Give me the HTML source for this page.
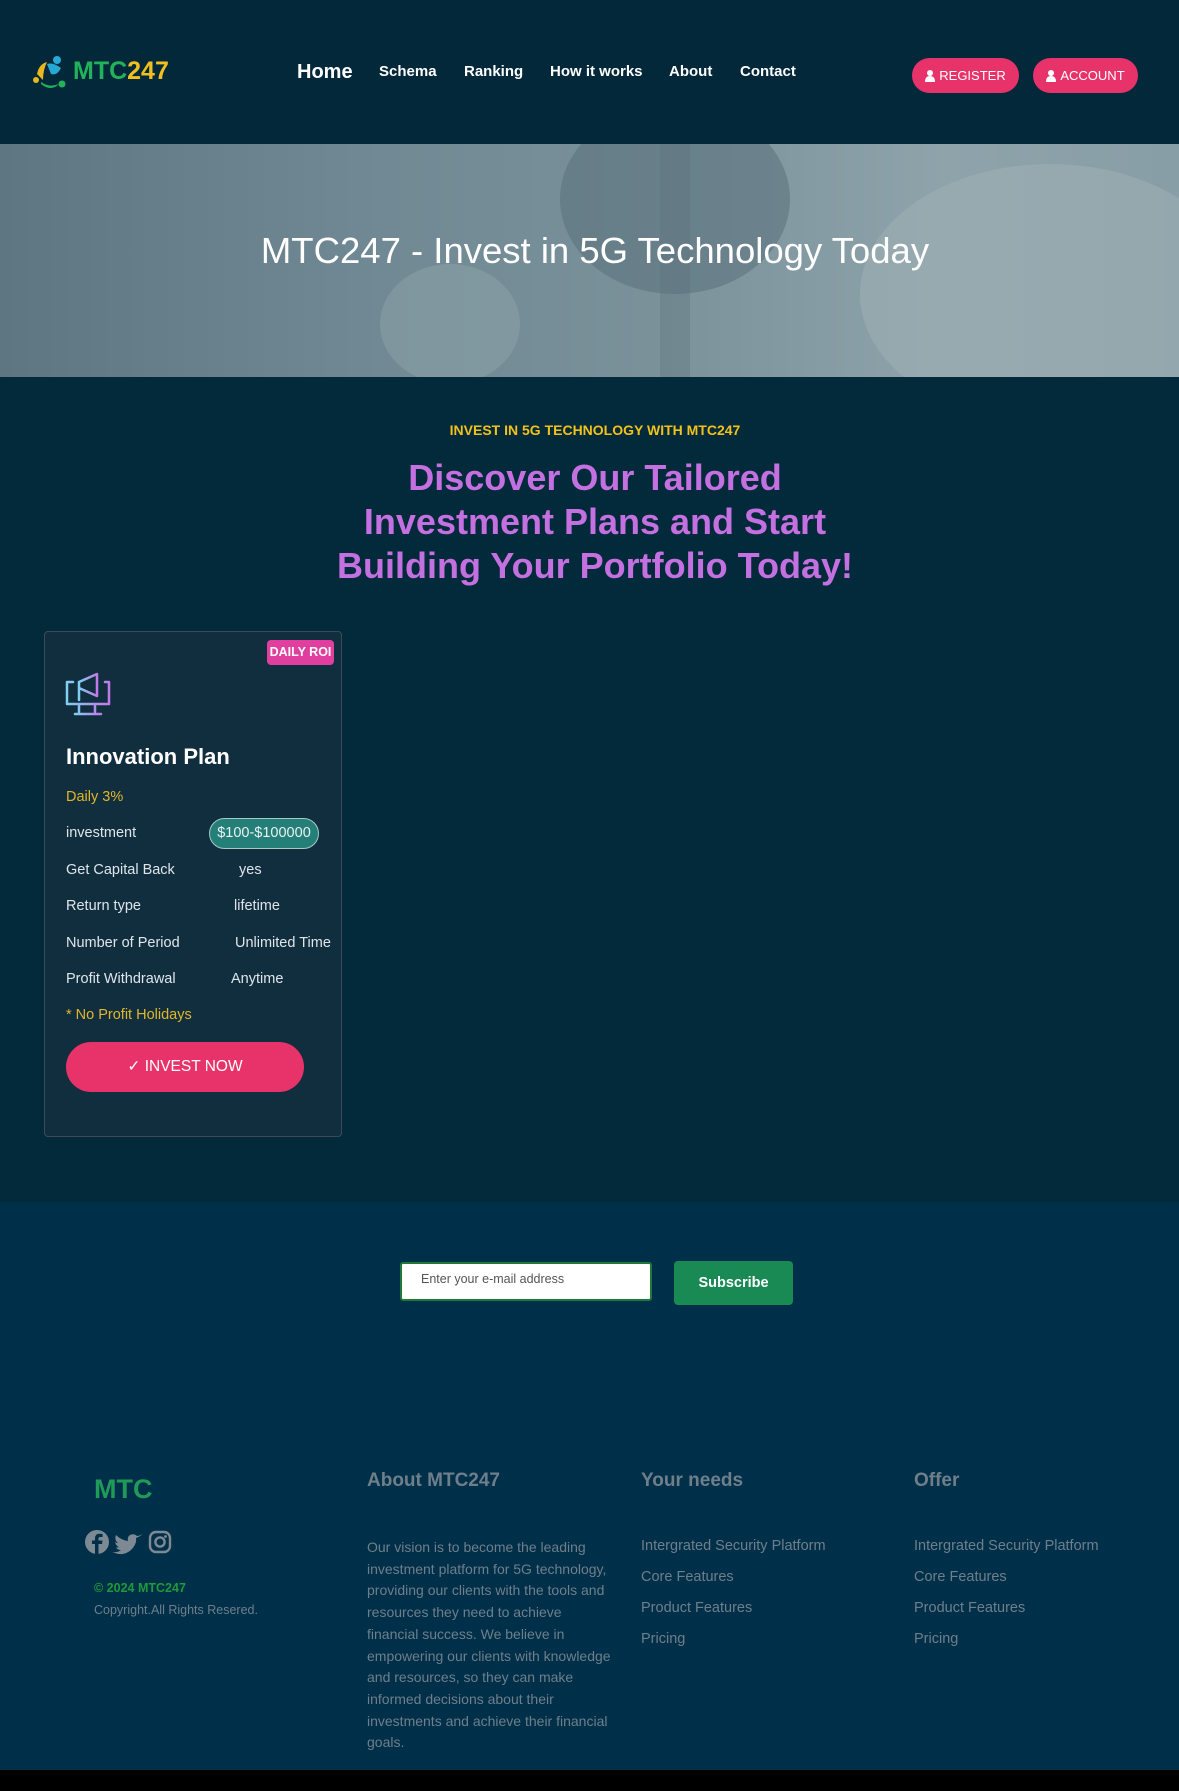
<!DOCTYPE html>
<html><head><meta charset="utf-8"><style>
*{margin:0;padding:0;box-sizing:border-box}
body{width:1179px;height:1791px;background:#000;font-family:"Liberation Sans",sans-serif;position:relative;overflow:hidden}
.a{position:absolute;white-space:nowrap}
header{position:absolute;left:0;top:0;width:1179px;height:144px;background:#03283a}
.nav{color:#fff;font-weight:bold;font-size:15px}
.btn{position:absolute;top:58px;height:35px;border-radius:18px;background:#e8336a;color:#fff;font-size:13px;display:flex;align-items:center;justify-content:center;gap:4px}
.hero{position:absolute;left:0;top:144px;width:1179px;height:233px;overflow:hidden;background:linear-gradient(90deg,#5e7682 0%,#6f8893 30%,#7a919a 55%,#8ea3aa 80%,#889ea6 100%)}
main{position:absolute;left:0;top:377px;width:1179px;height:825px;background:#022a3a}
.card{position:absolute;left:44px;top:631px;width:298px;height:506px;background:#112e3f;border:1px solid #3b4a58;border-radius:4px}
.row{position:absolute;left:66px;color:#dfe6ea;font-size:14.5px}
.val{position:absolute;color:#dfe6ea;font-size:14.5px}
.foot{position:absolute;left:0;top:1202px;width:1179px;height:568px;background:#002f4a}
.fh{color:#6f7f8a;font-weight:bold;font-size:19px}
.fl{color:#6f7f8a;font-size:14.5px}
</style></head><body>
<header>
<svg class="a" style="left:33px;top:54px" width="36" height="36" viewBox="0 0 36 36">
<circle cx="24" cy="6" r="4" fill="#27a9d6"/><path d="M14 10 Q20 8 28 14 Q24 22 18 20 Z" fill="#27a9d6"/>
<circle cx="3" cy="26" r="3" fill="#e8b820"/><path d="M4 20 Q6 10 14 8 Q10 16 10 26 Z" fill="#e8b820"/>
<circle cx="29" cy="30" r="3.5" fill="#22b35a"/><path d="M8 28 Q16 34 26 30 Q18 38 8 30 Z" fill="#22b35a"/>
</svg>
<div class="a" style="left:73px;top:57px;font-size:25px;font-weight:bold;color:#22b35a">MTC<span style="color:#f0c020">247</span></div>
<div class="a nav" style="left:297px;top:61px;font-size:20px">Home</div>
<div class="a nav" style="left:379px;top:63px">Schema</div>
<div class="a nav" style="left:464px;top:63px">Ranking</div>
<div class="a nav" style="left:550px;top:63px">How it works</div>
<div class="a nav" style="left:669px;top:63px">About</div>
<div class="a nav" style="left:740px;top:63px">Contact</div>
<div class="btn" style="left:912px;width:107px"><svg width="10" height="12" viewBox="0 0 10 12"><circle cx="5" cy="3" r="3" fill="#fff"/><path d="M0 12 Q0 6 5 6 Q10 6 10 12Z" fill="#fff"/></svg>REGISTER</div>
<div class="btn" style="left:1033px;width:105px"><svg width="10" height="12" viewBox="0 0 10 12"><circle cx="5" cy="3" r="3" fill="#fff"/><path d="M0 12 Q0 6 5 6 Q10 6 10 12Z" fill="#fff"/></svg>ACCOUNT</div>
</header>
<div class="hero">
<div class="a" style="left:660px;top:0;width:30px;height:233px;background:#6a8088;opacity:.6"></div>
<div class="a" style="left:560px;top:-40px;width:230px;height:190px;border-radius:50%;background:#5a717b;opacity:.55"></div>
<div class="a" style="left:860px;top:20px;width:380px;height:260px;border-radius:50%;background:#a2b3b8;opacity:.45"></div>
<div class="a" style="left:380px;top:120px;width:140px;height:120px;border-radius:50%;background:#8ea3aa;opacity:.5"></div>
<div class="a" style="left:0;top:86px;width:1190px;text-align:center;color:#fff;font-size:36.5px">MTC247 - Invest in 5G Technology Today</div>
</div>
<main></main>
<div class="a" style="left:0;top:422px;width:1190px;text-align:center;color:#f2c21b;font-weight:bold;font-size:14px">INVEST IN 5G TECHNOLOGY WITH MTC247</div>
<div class="a" style="left:0;top:456px;width:1190px;text-align:center;color:#c470e0;font-weight:bold;font-size:36px;line-height:44px">Discover Our Tailored<br>Investment Plans and Start<br>Building Your Portfolio Today!</div>
<div class="card"></div>
<div class="a" style="left:267px;top:640px;width:67px;height:25px;background:#e03fa0;border-radius:4px;color:#fff;font-weight:bold;font-size:12.5px;text-align:center;line-height:25px">DAILY ROI</div>
<svg class="a" style="left:65px;top:670px" width="48" height="48" viewBox="0 0 48 48"><defs><linearGradient id="g" x1="0" x2="1"><stop offset="0" stop-color="#7fd0f0"/><stop offset="1" stop-color="#c07ae8"/></linearGradient></defs>
<g fill="none" stroke="url(#g)" stroke-width="2.5" stroke-linecap="round" stroke-linejoin="round"><path d="M8 12 H2 V34 H44 V12 H40"/><path d="M14 36 V42 M30 36 V42 M10 44 H36"/><path d="M14 12 L32 4 V26 L14 18 Z M14 12 V30"/></g></svg>
<div class="a" style="left:66px;top:744px;color:#fff;font-weight:bold;font-size:22px">Innovation Plan</div>
<div class="row" style="top:789px;color:#e0b62a">Daily 3%</div>
<div class="row" style="top:825px">investment</div>
<div class="a" style="left:209px;top:818px;width:110px;height:31px;border-radius:16px;background:#237f78;border:1px solid #a7c9c8;color:#e8f2f2;font-size:14.5px;text-align:center;line-height:29px">$100-$100000</div>
<div class="row" style="top:862px">Get Capital Back</div><div class="val" style="left:239px;top:862px">yes</div>
<div class="row" style="top:898px">Return type</div><div class="val" style="left:234px;top:898px">lifetime</div>
<div class="row" style="top:935px">Number of Period</div><div class="val" style="left:235px;top:935px">Unlimited Time</div>
<div class="row" style="top:971px">Profit Withdrawal</div><div class="val" style="left:231px;top:971px">Anytime</div>
<div class="row" style="top:1007px;color:#e0b62a">* No Profit Holidays</div>
<div class="a" style="left:66px;top:1042px;width:238px;height:50px;border-radius:25px;background:#e8336a;color:#fff;font-size:15.5px;text-align:center;line-height:50px">✓ INVEST NOW</div>
<div class="foot"></div>
<div class="a" style="left:400px;top:1262px;width:252px;height:39px;background:#fff;border:2px solid #1f7a3a;border-radius:3px;color:#555;font-size:12.5px;padding:8px 0 0 19px">Enter your e-mail address</div>
<div class="a" style="left:674px;top:1261px;width:119px;height:44px;background:#1a8a55;border-radius:4px;color:#fff;font-weight:bold;font-size:14.5px;text-align:center;line-height:44px">Subscribe</div>
<div class="a" style="left:94px;top:1474px;color:#1f9a58;font-weight:bold;font-size:27px">MTC</div>
<svg class="a" style="left:84px;top:1529px" width="90" height="26" viewBox="0 0 90 26"><g fill="#7d8a93"><circle cx="13" cy="13" r="12"/><path d="M44 5 Q40 7 38 7 Q35 4 31 6 Q28 8 29 12 Q22 11 17 6 Q15 11 19 14 Q17 14 16 13 Q17 17 20 18 Q18 19 17 18 Q18 21 22 21 Q18 24 13 23 Q24 28 32 21 Q38 15 37 9 Q40 8 44 5Z" transform="translate(15 0)"/></g><path d="M14.5 25 V15 H18 L18.5 11.5 H14.5 V9.5 Q14.5 8 16 8 H18.6 V5 Q17 4.8 15.5 4.8 Q11 4.8 11 9.5 V11.5 H8 V15 H11 V25" fill="#002f4a"/><g fill="none" stroke="#7d8a93" stroke-width="2.4"><rect x="66" y="3" width="20" height="20" rx="6"/><circle cx="76" cy="13" r="4.6"/></g><circle cx="81.5" cy="7.5" r="1.4" fill="#7d8a93"/></svg>
<div class="a" style="left:94px;top:1581px;color:#1f9a38;font-weight:bold;font-size:12.5px">© 2024 MTC247</div>
<div class="a" style="left:94px;top:1603px;color:#6f7f8a;font-size:12.5px">Copyright.All Rights Resered.</div>
<div class="a fh" style="left:367px;top:1470px">About MTC247</div>
<div class="a fh" style="left:641px;top:1470px">Your needs</div>
<div class="a fh" style="left:914px;top:1470px">Offer</div>
<div class="a fl" style="left:367px;top:1537px;width:246px;white-space:normal;line-height:21.7px;font-size:14px">Our vision is to become the leading investment platform for 5G technology, providing our clients with the tools and resources they need to achieve financial success. We believe in empowering our clients with knowledge and resources, so they can make informed decisions about their investments and achieve their financial goals.</div>
<div class="a fl" style="left:641px;top:1538px">Intergrated Security Platform</div>
<div class="a fl" style="left:641px;top:1569px">Core Features</div>
<div class="a fl" style="left:641px;top:1600px">Product Features</div>
<div class="a fl" style="left:641px;top:1631px">Pricing</div>
<div class="a fl" style="left:914px;top:1538px">Intergrated Security Platform</div>
<div class="a fl" style="left:914px;top:1569px">Core Features</div>
<div class="a fl" style="left:914px;top:1600px">Product Features</div>
<div class="a fl" style="left:914px;top:1631px">Pricing</div>
</body></html>
